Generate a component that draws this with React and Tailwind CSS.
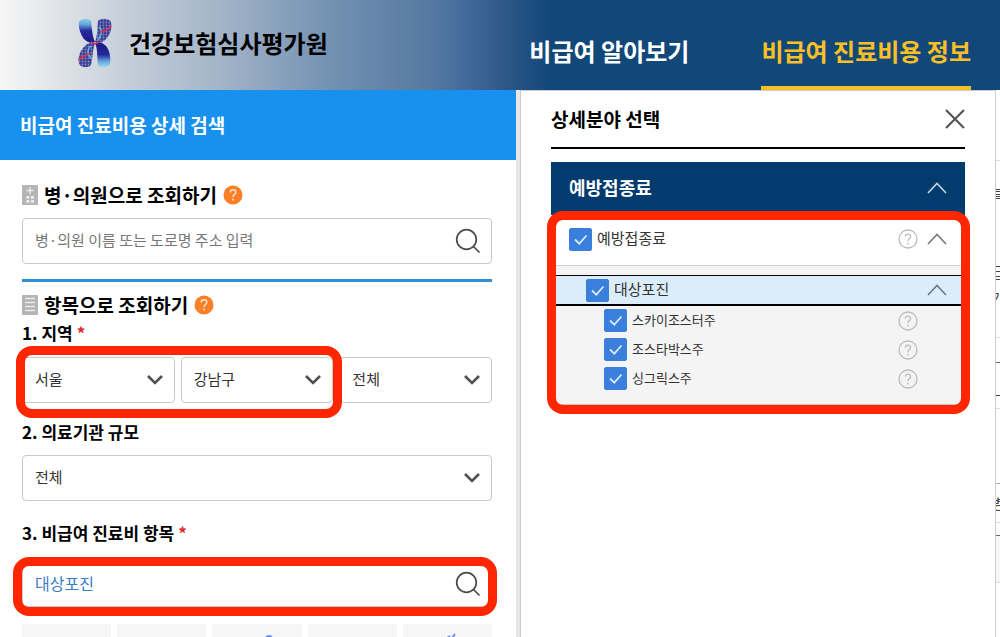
import React, { useState } from "react";

function Logo() {
  return (
    <svg viewBox="0 0 34 50" className="h-[50px] w-[34px] shrink-0" aria-hidden="true">
      <defs>
        <linearGradient id="petalTop" x1="0" y1="0" x2="0" y2="1">
          <stop offset="0" stopColor="#8fd0ea" />
          <stop offset="0.25" stopColor="#5f9fd6" />
          <stop offset="0.5" stopColor="#26289a" />
          <stop offset="1" stopColor="#1f1a85" />
        </linearGradient>
        <linearGradient id="petalBottom" x1="0" y1="1" x2="0" y2="0">
          <stop offset="0" stopColor="#9adcf0" />
          <stop offset="0.25" stopColor="#5f9fd6" />
          <stop offset="0.5" stopColor="#26289a" />
          <stop offset="1" stopColor="#1f1a85" />
        </linearGradient>
        <pattern id="mesh" width="3" height="3" patternUnits="userSpaceOnUse">
          <rect width="3" height="3" fill="#3c3c94" />
          <circle cx="1.5" cy="1.5" r="0.9" fill="#7f8fc4" />
        </pattern>
      </defs>
      <path d="M1 4C3 0 11 0 13 3C14 9 14 18 17 24C13 26 7 24 4 18C2 14 0 8 1 4Z" fill="url(#petalTop)" />
      <path d="M32 46C30 50 22 50 20 47C19 41 20 31 17 25C21 23 27 25 30 31C32 35 33 42 32 46Z" fill="url(#petalBottom)" />
      <path d="M20 3C22 0 31 0 33 4C34 10 33 15 29 20C25 25 20 26 17 24C20 17 19 9 20 3Z" fill="url(#mesh)" />
      <path d="M13 47C11 50 3 50 1 46C0 40 1 35 5 30C9 25 14 23 17 25C14 33 15 41 13 47Z" fill="url(#mesh)" />
      <path d="M21 9C25 12 23 18 20 22M13 28C8 32 10 38 14 41" fill="none" stroke="#63b4dc" strokeWidth="1.6" />
      <path d="M22 14C27 14 30 12 33 8M1 42C4 37 8 38 12 35M13 24L17 26L21 24" fill="none" stroke="#e0304e" strokeWidth="1.5" />
    </svg>
  );
}

function SearchIcon() {
  return (
    <svg viewBox="0 0 26 26" className="h-[26px] w-[26px]" fill="none" stroke="#4b4b4b" strokeWidth="1.7" aria-hidden="true">
      <circle cx="11.5" cy="11.5" r="9.8" />
      <path d="M18.5 18.5L24.5 24.5" />
    </svg>
  );
}

function HelpDot() {
  return (
    <button type="button" aria-label="도움말" className="h-5 w-5 shrink-0">
      <svg viewBox="0 0 20 20" className="h-5 w-5" fill="none" aria-hidden="true">
        <circle cx="10" cy="10" r="9.5" fill="#fb7f28" />
        <path d="M7.2 7.4C7.3 3.9 12.9 4 12.8 7.3C12.7 9.5 10 9.5 10 12" stroke="#ffe6d2" strokeWidth="1.5" />
        <circle cx="10" cy="14.6" r="1" fill="#ffe6d2" />
      </svg>
    </button>
  );
}

function HelpRing() {
  return (
    <button type="button" aria-label="도움말" className="h-5 w-5 shrink-0">
      <svg viewBox="0 0 20 20" className="h-5 w-5" fill="none" stroke="#bcbcbc" aria-hidden="true">
        <circle cx="10" cy="10" r="9" strokeWidth="1.3" />
        <path d="M7.4 7.6C7.4 4.2 12.7 4.3 12.6 7.5C12.5 9.6 10 9.6 10 12.2" strokeWidth="1.3" />
        <circle cx="10" cy="14.6" r="0.9" fill="#bcbcbc" stroke="none" />
      </svg>
    </button>
  );
}

function BuildingIcon() {
  return (
    <svg viewBox="0 0 16 20" className="h-5 w-4 shrink-0" aria-hidden="true">
      <rect width="16" height="20" rx="1" fill="#b5b5b5" />
      <path d="M8 2V9M4.5 5.5H11.5" stroke="#ececec" strokeWidth="1.4" />
      <path d="M4.5 11h3v2.8h-3zM9 11h3v2.8H9zM4.5 15h3v2.8h-3zM9 15h3v2.8H9z" fill="#ececec" />
    </svg>
  );
}

function ListIcon() {
  return (
    <svg viewBox="0 0 16 20" className="h-5 w-4 shrink-0" aria-hidden="true">
      <rect width="16" height="20" rx="1" fill="#b5b5b5" />
      <path d="M3 3.5H13M3 7.5H13M3 11.5H13M3 15.5H13" stroke="#ececec" strokeWidth="1.3" />
    </svg>
  );
}

function ChevronUp({ className }) {
  return (
    <svg viewBox="0 0 20 12" className={"h-3 w-5 " + className} fill="none" stroke="currentColor" strokeWidth="1.6" aria-hidden="true">
      <path d="M1 11L10 1.5L19 11" />
    </svg>
  );
}

function Field({ label, options }) {
  return (
    <div className="relative">
      <select
        aria-label={label}
        className="block h-[46px] w-full appearance-none rounded border border-[#c9c9c9] bg-white pb-0.5 pl-3 pr-10 text-[15px] text-[#333]"
      >
        {options.map((o) => (
          <option key={o}>{o}</option>
        ))}
      </select>
      <svg
        viewBox="0 0 16 10"
        className="pointer-events-none absolute right-3 top-[18px] h-[10px] w-4"
        fill="none"
        stroke="#505050"
        strokeWidth="2.6"
        aria-hidden="true"
      >
        <path d="M1 1L8 8L15 1" />
      </svg>
    </div>
  );
}

function SearchBox({ id, children, textClass, ...rest }) {
  return (
    <div className="relative">
      <input
        id={id}
        type="text"
        {...rest}
        className={
          "block h-[46px] w-full rounded border border-[#c9c9c9] bg-white pb-[3px] pl-3 pr-12 text-[#3a7bc8] placeholder:text-[#777] " +
          textClass
        }
      />
      <button type="button" aria-label="검색" className="absolute right-[11px] top-[10px]">
        <SearchIcon />
      </button>
      {children}
    </div>
  );
}

function Check({ label, className }) {
  const [on, setOn] = useState(true);
  return (
    <label className={"flex grow items-center gap-[5px] text-[#333] " + className}>
      <span className="relative block h-[23px] w-[23px]">
        <input
          type="checkbox"
          checked={on}
          onChange={() => setOn(!on)}
          className="peer block h-[23px] w-[23px] appearance-none rounded-xs border border-[#3a7fdc] bg-white checked:bg-[#3a7fdc]"
        />
        <svg
          viewBox="0 0 23 23"
          className="pointer-events-none absolute inset-0 hidden peer-checked:block"
          fill="none"
          stroke="#d8eaff"
          strokeWidth="1.8"
          aria-hidden="true"
        >
          <path d="M6 11.5L10.3 15.7L17.5 7.5" />
        </svg>
      </span>
      <span className="pb-0.5">{label}</span>
    </label>
  );
}

const ring = "pointer-events-none absolute rounded-2xl border-9 border-[#ff2600]";

const vaccines = ["스카이조스터주", "조스타박스주", "싱그릭스주"];

function SearchPanel() {
  return (
    <section className="w-[51.6%] shrink-0">
      <h1 className="flex h-[70px] items-center bg-[#1790ee] px-5 text-[19px] font-bold text-white">비급여 진료비용 상세 검색</h1>
      <form className="pl-[22px] pr-6 pt-[23px]" onSubmit={(e) => e.preventDefault()}>
        <h2 className="flex h-6 items-center gap-[6px] text-[19px] font-bold text-black">
          <BuildingIcon />
          <label htmlFor="clinic">병·의원으로 조회하기</label>
          <HelpDot />
        </h2>
        <div className="pt-[11px]">
          <SearchBox id="clinic" placeholder="병·의원 이름 또는 도로명 주소 입력" textClass="text-[15px]" />
        </div>
        <hr className="mt-[15px] border-t-3 border-[#2f8fd3]" />
        <h2 className="mt-[11px] flex h-6 items-center gap-[6px] text-[19px] font-bold text-black">
          <ListIcon />
          <span>항목으로 조회하기</span>
          <HelpDot />
        </h2>
        <h3 className="mt-1 flex h-6 items-center gap-1 text-[17px] font-bold text-black">
          1. 지역 <span className="text-[#dd2a2a]">*</span>
        </h3>
        <div className="mt-3 grid grid-cols-3 gap-[6px]">
          <div className="relative col-span-2 grid grid-cols-2 gap-[6px]">
            <Field label="시도" options={["서울", "부산", "대구"]} />
            <Field label="시군구" options={["강남구", "서초구", "송파구"]} />
            <span className={ring + " -bottom-[15px] -left-[6px] -right-[9px] -top-[11px] z-10"} />
          </div>
          <Field label="읍면동" options={["전체"]} />
        </div>
        <h3 className="mt-[17px] flex h-6 items-center text-[17px] font-bold text-black">2. 의료기관 규모</h3>
        <div className="mt-[11px]">
          <Field label="의료기관 규모" options={["전체"]} />
        </div>
        <h3 className="mt-5 flex h-6 items-center gap-1 text-[17px] font-bold text-black">
          <label htmlFor="item">3. 비급여 진료비 항목</label> <span className="text-[#dd2a2a]">*</span>
        </h3>
        <div className="mt-4">
          <SearchBox id="item" defaultValue="대상포진" textClass="text-[16px]">
            <span className={ring + " -bottom-[9px] -left-[9px] -right-[5px] -top-1"} />
          </SearchBox>
        </div>
        <div className="mt-[17px] grid h-[13px] grid-cols-5 gap-[6px] overflow-hidden">
          <div className="bg-[#f6f6f7]" />
          <div className="bg-[#f6f6f7]" />
          <div className="flex justify-center bg-[#f6f6f7] pl-6 pt-[10px]">
            <svg viewBox="0 0 12 8" className="h-2 w-3" aria-hidden="true">
              <circle cx="6" cy="5" r="4" fill="#6c8cf0" />
            </svg>
          </div>
          <div className="bg-[#f6f6f7]" />
          <div className="flex justify-center bg-[#f6f6f7] pl-2 pt-[9px]">
            <svg viewBox="0 0 12 8" className="h-2 w-3" stroke="#6c8cf0" strokeWidth="2" aria-hidden="true">
              <path d="M2 5L5 3M7 5L10 1" />
            </svg>
          </div>
        </div>
      </form>
    </section>
  );
}

function DetailPanel() {
  return (
    <section className="min-w-0 grow border-t border-[#c9ced6] bg-white px-[30px]">
      <div className="flex h-[58px] items-center justify-between border-b-2 border-black">
        <h2 className="text-[19px] font-bold text-black">상세분야 선택</h2>
        <button type="button" aria-label="닫기">
          <svg viewBox="0 0 20 20" className="h-5 w-5" fill="none" stroke="#555" strokeWidth="2.2" aria-hidden="true">
            <path d="M1 1L19 19M19 1L1 19" />
          </svg>
        </button>
      </div>
      <div className="mt-[13px]">
        <button type="button" className="flex h-[53px] w-full items-center justify-between bg-[#023b6d] px-[18px] pb-0.5 text-[18px] font-bold text-white">
          예방접종료
          <ChevronUp className="text-[#c4d6e8]" />
        </button>
        <div className="relative border-b-2 border-[#c8c8c8] bg-[#f4f4f4]">
          <div className="flex h-[51px] items-center border-b border-[#d2d2d2] bg-white px-[18px] pb-0.5">
            <Check label="예방접종료" className="text-[15px]" />
            <HelpRing />
            <button type="button" aria-label="접기" className="ml-[9px]">
              <ChevronUp className="text-[#777]" />
            </button>
          </div>
          <div className="mt-[9px] flex h-[31px] items-center border-b-2 border-t border-black bg-[#dbedfa] pl-[35px] pr-[18px]">
            <Check label="대상포진" className="text-[15px]" />
            <button type="button" aria-label="접기">
              <ChevronUp className="text-[#6d7a85]" />
            </button>
          </div>
          <ul className="flex flex-col gap-[6px] pb-[14px] pl-[53px] pr-[47px] pt-[3px]">
            {vaccines.map((v) => (
              <li key={v} className="flex items-center">
                <Check label={v} className="text-[13px]" />
                <HelpRing />
              </li>
            ))}
          </ul>
          <span className={ring + " -bottom-[10px] -left-1 -right-[5px] -top-1"} />
        </div>
      </div>
    </section>
  );
}

function PageEdge() {
  return (
    <div className="flex w-[5px] shrink-0 flex-col overflow-hidden border-l border-[#cfcfcf] bg-white text-[15px] text-[#444]" aria-hidden="true">
      <div className="h-[71px] border-b border-[#ddd]" />
      <div className="flex h-[69px] items-center justify-center">특</div>
      <div className="flex h-[86px] flex-col items-center justify-center pt-6 leading-[26px]">
        <span>급</span>
        <span>가</span>
      </div>
      <div className="mt-[21px] h-[26px] border-b border-t border-b-[#666] border-t-[#ddd]" />
      <div className="h-[33px] border-b border-[#444]" />
      <div className="h-[13px] border-b border-[#ddd]" />
      <div className="h-[75px] border-b border-[#aaa]" />
      <div className="flex h-[39px] items-center justify-center border-b border-[#ddd]">병</div>
      <div className="h-[13px] border-b border-[#666]" />
      <div className="h-[47px] border-b border-[#ddd] bg-[#f5f6f8]" />
    </div>
  );
}

export default function App() {
  return (
    <div className="h-screen overflow-hidden bg-white font-['Noto_Sans_CJK_KR','Noto_Sans',sans-serif]">
      <header className="flex h-[90px] items-stretch bg-[#12477a] bg-[linear-gradient(90deg,#f6f6f6_0%,#dfe3e7_6%,#c3cdd8_13%,#a3b4c8_22%,#7391b1_33%,#567aa2_43%,#41699a_47%,#2a5685_51%,#12477a_55%)] pr-[29px]">
        <a href="#home" className="flex items-center gap-[17px] pb-1 pl-[78px] text-[24px] font-bold text-black">
          <Logo />
          건강보험심사평가원
        </a>
        <nav className="ml-auto flex gap-[72px] text-[24px] font-bold">
          <a href="#guide" className="flex items-center pt-3 text-white">비급여 알아보기</a>
          <a href="#cost" className="flex items-center border-b-4 border-[#fcc025] pt-4 text-[#fcc025]">비급여 진료비용 정보</a>
        </nav>
      </header>
      <main className="flex h-full">
        <SearchPanel />
        <div className="w-[5px] shrink-0 border-r border-[#ccc] bg-[#e6e6e6]" />
        <DetailPanel />
        <PageEdge />
      </main>
    </div>
  );
}
